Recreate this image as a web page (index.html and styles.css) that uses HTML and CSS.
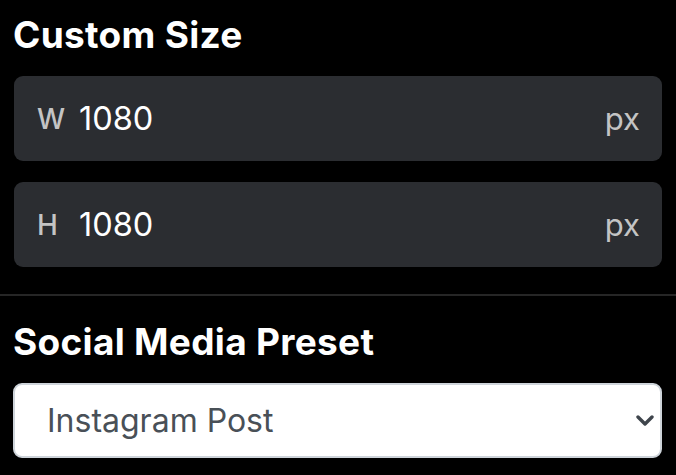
FILE: index.html
```html
<!DOCTYPE html>
<html>
<head>
<meta charset="utf-8">
<link rel="stylesheet" href="styles.css">
</head>
<body>
<div class="panel">
  <section class="group group-size">
    <h2 class="title">Custom Size</h2>
    <div class="fields">
      <label class="field">
        <span class="field-label">W</span>
        <input class="field-input" type="text" value="1080">
        <span class="field-unit">px</span>
      </label>
      <label class="field">
        <span class="field-label">H</span>
        <input class="field-input" type="text" value="1080">
        <span class="field-unit">px</span>
      </label>
    </div>
  </section>
  <hr class="divider">
  <section class="group group-preset">
    <h2 class="title">Social Media Preset</h2>
    <div class="select-wrap">
      <select class="select">
        <option>Instagram Post</option>
        <option>Instagram Story</option>
        <option>Facebook Post</option>
      </select>
      <svg class="chevron" width="18" height="12" viewBox="0 0 18 12"><path d="M2 2l7 7 7-7" fill="none" stroke="#3f454c" stroke-width="3.4" stroke-linecap="round" stroke-linejoin="round"/></svg>
    </div>
  </section>
</div>
</body>
</html>
```
FILE: styles.css
```css
html, body {
  margin: 0;
  padding: 0;
  background: #000;
}
body {
  font-family: "Inter", "Liberation Sans", sans-serif;
  color: #fff;
  width: 676px;
  height: 475px;
  overflow: hidden;
}
.panel {
  display: flex;
  flex-direction: column;
}
.group {
  padding: 0 14px 0 13px;
}
.group-size {
  padding-top: 13px;
}
.title {
  margin: 0;
  font-size: 37px;
  line-height: 44px;
  font-weight: 700;
  letter-spacing: 0.3px;
}
.fields {
  margin-top: 19px;
  display: flex;
  flex-direction: column;
  gap: 21px;
  padding-left: 1px;
}
.field {
  display: flex;
  align-items: center;
  height: 85px;
  background: #2b2d31;
  border-radius: 9px;
  padding: 0 22px 0 23px;
  box-sizing: border-box;
}
.field-label {
  width: 42px;
  font-size: 28px;
  color: #c4c4c4;
  font-weight: 500;
}
.field-input {
  flex: 1;
  min-width: 0;
  background: transparent;
  border: 0;
  outline: none;
  color: #fff;
  font-family: inherit;
  font-size: 32.5px;
  padding: 0;
}
.field-unit {
  font-size: 31px;
  color: #c4c4c4;
}
.divider {
  margin: 27px 0 0;
  border: 0;
  height: 2px;
  background: #262626;
}
.group-preset {
  padding-top: 24px;
}
.select-wrap {
  position: relative;
  margin-top: 19px;
}
.select {
  display: block;
  width: 100%;
  height: 75px;
  appearance: none;
  -webkit-appearance: none;
  background: #fff;
  border: 2px solid #ced4da;
  border-radius: 9px;
  padding: 0 60px 0 32px;
  font-family: inherit;
  font-size: 32px;
  color: #495057;
}
.chevron {
  position: absolute;
  right: 8px;
  top: 32px;
}
```
